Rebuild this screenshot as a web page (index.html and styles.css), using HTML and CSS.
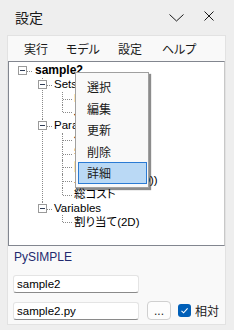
FILE: index.html
```html
<!DOCTYPE html>
<html lang="ja">
<head>
<meta charset="utf-8">
<link rel="stylesheet" href="styles.css">
</head>
<body>
<div class="window">
  <div class="titlebar">
    <span class="title">設定</span>
    <div class="controls">
      <svg class="chev" width="16" height="8" viewBox="0 0 16 8"><polyline points="0.5,0.5 7.5,7 14.5,0.5" fill="none" stroke="#1a1a1a" stroke-width="1"/></svg>
      <svg class="close" width="10" height="10" viewBox="0 0 10 10"><path d="M0.5 0.5 L9.5 9.5 M9.5 0.5 L0.5 9.5" stroke="#1a1a1a" stroke-width="1"/></svg>
    </div>
  </div>
  <div class="panel">
    <div class="menubar">
      <span class="mitem">実行</span>
      <span class="mitem">モデル</span>
      <span class="mitem">設定</span>
      <span class="mitem">ヘルプ</span>
    </div>
    <div class="treebox">
      <ul class="tree">
        <li>
          <div class="row"><span class="exp"></span><span class="label bold">sample2</span></div>
          <ul>
            <li>
              <div class="row"><span class="exp"></span><span class="label">Sets</span></div>
              <ul>
                <li><div class="row"><span class="leaf"></span><span class="label">I</span></div></li>
                <li><div class="row"><span class="leaf"></span><span class="label">J</span></div></li>
              </ul>
            </li>
            <li>
              <div class="row"><span class="exp"></span><span class="label">Parameters</span></div>
              <ul>
                <li><div class="row"><span class="leaf"></span><span class="label">供給</span></div></li>
                <li><div class="row"><span class="leaf"></span><span class="label">需要</span></div></li>
                <li><div class="row"><span class="leaf"></span><span class="label">固定費</span></div></li>
                <li><div class="row"><span class="leaf"></span><span class="label">単位輸送費(2D))</span></div></li>
                <li><div class="row"><span class="leaf"></span><span class="label">総コスト</span></div></li>
              </ul>
            </li>
            <li>
              <div class="row"><span class="exp"></span><span class="label">Variables</span></div>
              <ul>
                <li><div class="row"><span class="leaf"></span><span class="label">割り当て(2D)</span></div></li>
              </ul>
            </li>
          </ul>
        </li>
      </ul>
    </div>
    <div class="lower">
      <div class="section">PySIMPLE</div>
      <div class="field">sample2</div>
      <div class="filerow">
        <div class="field">sample2.py</div>
        <div class="btn">...</div>
        <span class="check"><svg width="13" height="13" viewBox="0 0 13 13"><polyline points="3.5,6.8 5.6,8.8 9.6,4.4" fill="none" stroke="#ffffff" stroke-width="1.1"/></svg></span>
        <span class="checklabel">相対</span>
      </div>
    </div>
  </div>
  <div class="ctxmenu">
    <div class="citem">選択</div>
    <div class="citem">編集</div>
    <div class="citem">更新</div>
    <div class="citem">削除</div>
    <div class="citem sel">詳細</div>
  </div>
</div>
</body>
</html>
```
FILE: styles.css
```css
html, body {
  margin: 0;
  padding: 0;
}
body {
  background: #eeeeee;
  font-family: "Liberation Sans", "Noto Sans CJK JP", sans-serif;
  color: #1a1a1a;
  font-feature-settings: "palt";
}
.window {
  width: 234px;
  height: 330px;
  position: relative;
  overflow: hidden;
}
.titlebar {
  height: 35px;
  display: flex;
  align-items: center;
}
.title {
  font-family: "Noto Sans CJK JP", sans-serif;
  font-size: 14px;
  margin-left: 15px;
  margin-top: -1px;
}
.controls {
  margin-left: auto;
  display: flex;
  align-items: center;
  margin-right: 20px;
  margin-top: -3px;
}
.chev {
  display: block;
  margin-top: 3px;
}
.close {
  display: block;
  margin-left: 19px;
}
.panel {
  margin-left: 7px;
  width: 217px;
  border: 1px solid #e2e2e2;
  background: #f9f9f9;
}
.menubar {
  height: 25px;
  display: flex;
  align-items: center;
  padding-left: 16px;
  gap: 18px;
  font-family: "Noto Sans CJK JP", sans-serif;
  font-size: 12px;
}
.mitem:last-child {
  margin-left: 2px;
}
.treebox {
  height: 183px;
  border: 1px solid #82868f;
  border-right-color: #c8c8c8;
  background: #ffffff;
  overflow: hidden;
}
.tree, .tree ul {
  list-style: none;
  margin: 0;
  padding: 0;
}
.tree {
  padding: 2px 0 0 9px;
}
.tree ul {
  padding-left: 20px;
}
.tree ul > li {
  position: relative;
}
.tree ul > li::before {
  content: "";
  position: absolute;
  left: 4px;
  top: 0;
  bottom: 0;
  border-left: 1px dotted #8a8a8a;
}
.tree ul > li:last-child::before {
  bottom: auto;
  height: 7px;
}
.row {
  height: 13.75px;
  display: flex;
  align-items: center;
  position: relative;
  white-space: nowrap;
}
.row::after {
  content: "";
  position: absolute;
  left: 5px;
  width: 9px;
  top: 7px;
  border-top: 1px dotted #8a8a8a;
}
.exp {
  width: 9px;
  height: 9px;
  box-sizing: border-box;
  border: 1px solid #9a9a9a;
  background: #ffffff;
  position: relative;
  z-index: 1;
  flex: none;
}
.exp::after {
  content: "";
  position: absolute;
  left: 1px;
  top: 3px;
  width: 5px;
  height: 1px;
  background: #2e3c55;
}
.leaf {
  width: 9px;
  flex: none;
}
.label {
  margin-left: 7px;
  font-size: 11.5px;
  color: #000000;
  line-height: 13px;
}
.label.bold {
  font-weight: bold;
  font-size: 12px;
  margin-left: 8px;
}
.lower {
  padding: 0 5px 4px 5px;
}
.section {
  margin-top: 3px;
  height: 16px;
  line-height: 16px;
  font-size: 12px;
  color: #222a6e;
  padding-left: 1px;
}
.field {
  margin-top: 10px;
  width: 126px;
  height: 18px;
  box-sizing: border-box;
  border: 1px solid #e4e4e4;
  border-bottom-color: #8a8a8a;
  border-radius: 3px;
  background: #ffffff;
  font-size: 11.5px;
  line-height: 16px;
  padding-left: 3px;
  color: #000000;
}
.filerow {
  margin-top: 8px;
  display: flex;
  align-items: center;
}
.filerow .field {
  margin-top: 0;
}
.btn {
  margin-left: 8px;
  width: 24px;
  height: 19px;
  box-sizing: border-box;
  border: 1px solid #d0d0d0;
  border-radius: 4px;
  background: #fdfdfd;
  font-size: 12px;
  line-height: 18px;
  text-align: center;
  color: #1a1a1a;
}
.check {
  margin-left: 7px;
  width: 13px;
  height: 13px;
  border-radius: 3px;
  background: #005fb8;
  display: block;
}
.check svg {
  display: block;
}
.checklabel {
  margin-left: 4px;
  font-family: "Noto Sans CJK JP", sans-serif;
  font-size: 12px;
  color: #1a1a1a;
}
.ctxmenu {
  position: absolute;
  left: 75px;
  top: 72px;
  width: 74px;
  box-sizing: border-box;
  padding: 3px 1px 3px 2px;
  border: 1px solid #a0a0a0;
  background: #f9f9f9;
  box-shadow: 2px 2px 1px rgba(0, 0, 0, 0.45);
  font-family: "Noto Sans CJK JP", sans-serif;
  font-size: 12px;
}
.citem {
  height: 21.5px;
  line-height: 21px;
  padding-left: 9px;
  box-sizing: border-box;
  color: #1a1a1a;
}
.citem.sel {
  background: #bad9f5;
  border: 1px solid #2b7bd4;
  padding-left: 8px;
  line-height: 19px;
}
```
